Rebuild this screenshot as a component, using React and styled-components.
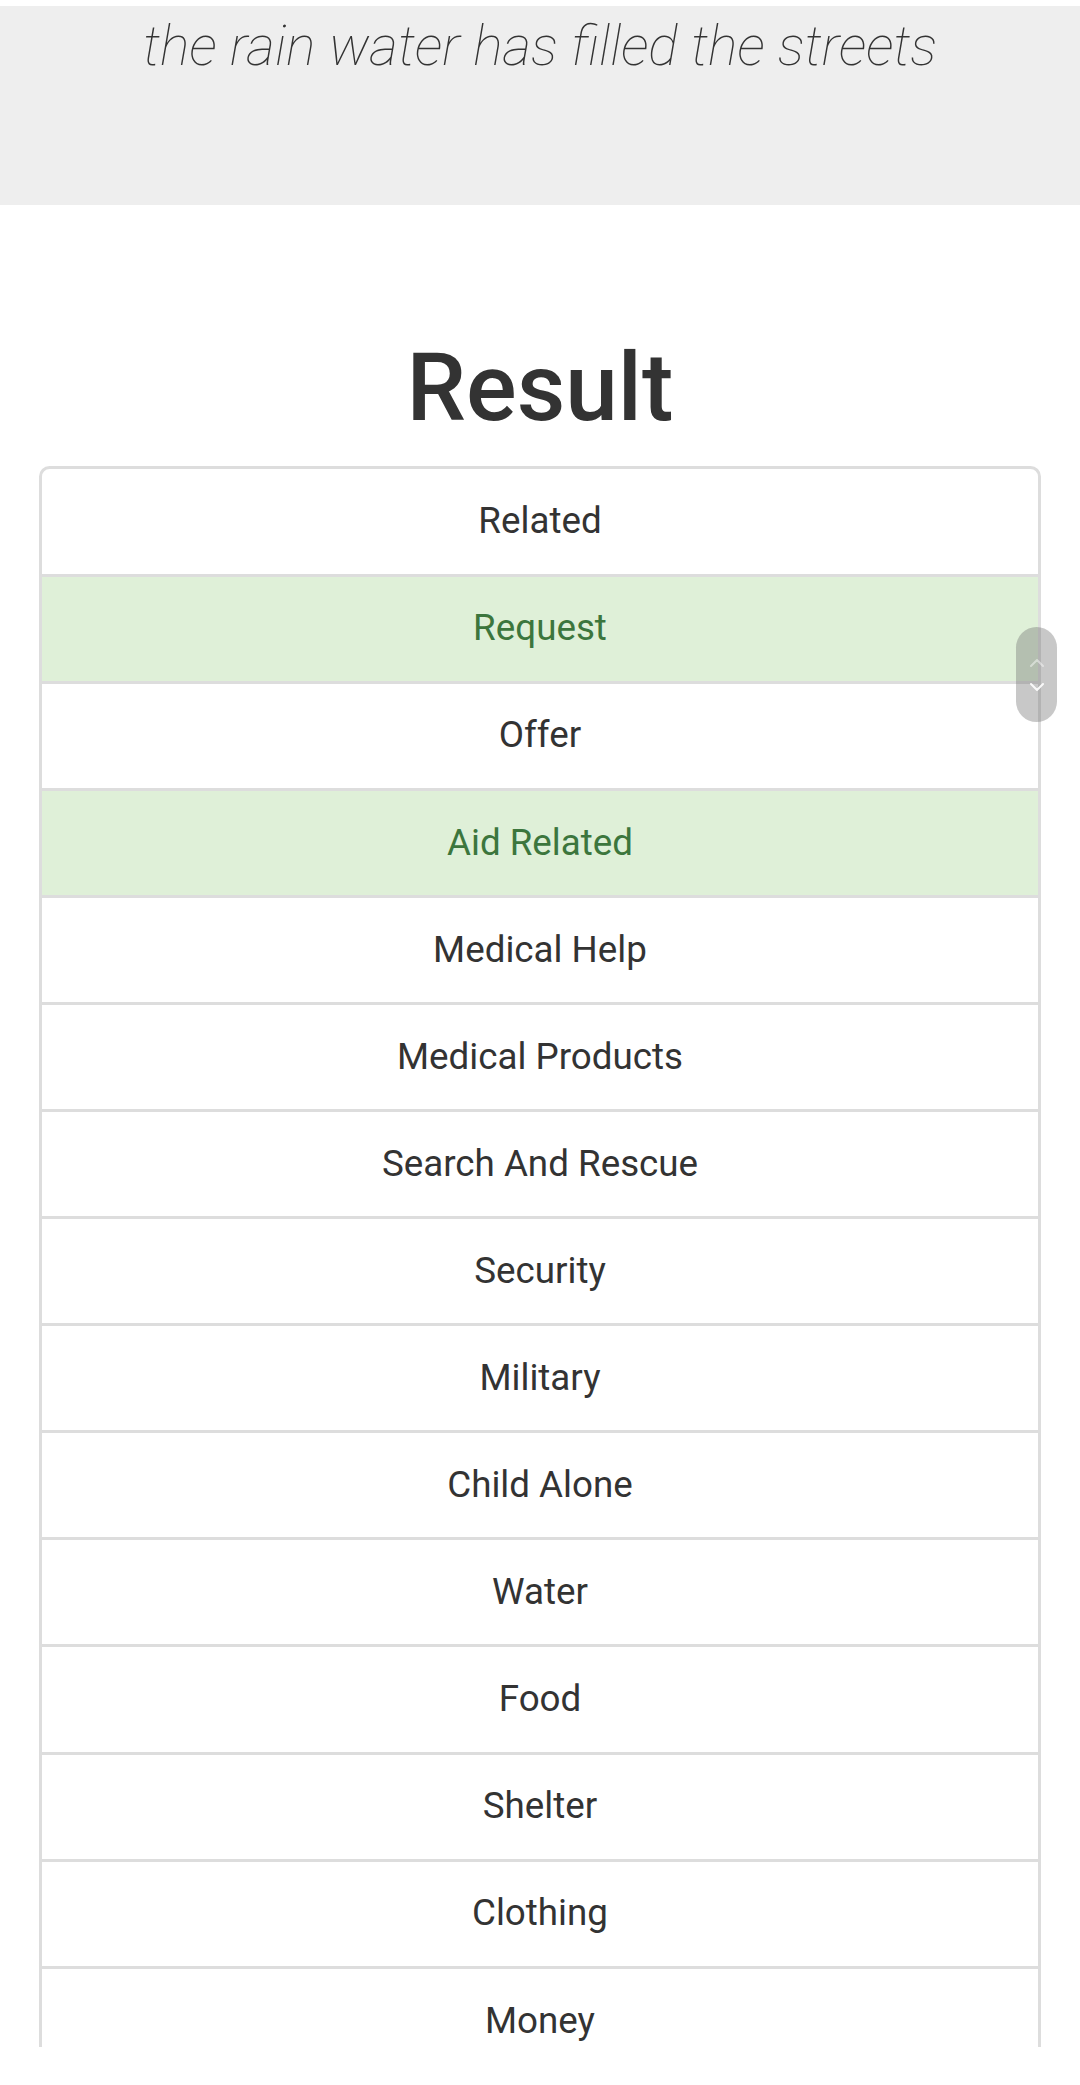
import React from "react";
import styled, { createGlobalStyle } from "styled-components";

const S = 2.625;
const px = (v) => `${(v * S).toFixed(3)}px`;

const Global = createGlobalStyle`
  html, body { margin: 0; padding: 0; background: #fff; }
  body { font-family: Roboto, "Helvetica Neue", Arial, sans-serif; color: #333; }
  * { box-sizing: border-box; }
`;

const Viewport = styled.div`
  position: relative;
  height: 2047px;
  overflow: hidden;
  padding-top: 6px;
`;

const Jumbotron = styled.section`
  background: #eee;
  height: 199px;
  padding-top: 10px;
  margin-bottom: ${px(30)};
  text-align: center;
`;

const Message = styled.p`
  margin: 0;
  font-size: 55.5px;
  line-height: 1.1;
  font-weight: 100;
  font-style: italic;
  color: #333;
`;

const Container = styled.div`
  display: flow-root;
  padding: 0 ${px(15)};
`;

const Title = styled.h1`
  margin: ${px(20)} 0 ${px(10)};
  font-size: ${px(36)};
  line-height: 1.1;
  font-weight: 500;
  text-align: center;
  color: #333;
`;

const ListGroup = styled.ul`
  list-style: none;
  margin: 0;
  padding: 0;
`;

const Item = styled.li`
  display: block;
  padding: 25.8px ${px(15)};
  margin-bottom: -3px;
  border: 3px solid #ddd;
  font-size: ${px(14)};
  line-height: ${px(20)};
  text-align: center;
  background: ${(p) => (p.$success ? "#dff0d8" : "#fff")};
  color: ${(p) => (p.$success ? "#3c763d" : "#333")};
  &:first-child {
    border-top-left-radius: ${px(4)};
    border-top-right-radius: ${px(4)};
  }
`;

const ScrollPill = styled.div`
  position: absolute;
  left: 1016px;
  top: 627px;
  width: 41px;
  height: 95px;
  border-radius: 21px;
  background: rgba(110, 110, 110, 0.38);
  display: flex;
  flex-direction: column;
  align-items: center;
  justify-content: center;
  gap: 14px;
`;

const Chevron = ({ up, faded }) => (
  <svg width="16" height="10" viewBox="0 0 16 10" style={{ opacity: faded ? 0.45 : 0.9 }}>
    <path
      d={up ? "M2 8 L8 2 L14 8" : "M2 2 L8 8 L14 2"}
      fill="none"
      stroke="#fff"
      strokeWidth="2"
      strokeLinecap="round"
      strokeLinejoin="round"
    />
  </svg>
);

const categories = [
  ["Related", false],
  ["Request", true],
  ["Offer", false],
  ["Aid Related", true],
  ["Medical Help", false],
  ["Medical Products", false],
  ["Search And Rescue", false],
  ["Security", false],
  ["Military", false],
  ["Child Alone", false],
  ["Water", false],
  ["Food", false],
  ["Shelter", false],
  ["Clothing", false],
  ["Money", false],
];

export default function App() {
  return (
    <>
      <Global />
      <Viewport>
        <Jumbotron>
          <Message>the rain water has filled the streets</Message>
        </Jumbotron>
        <Container>
          <Title>Result</Title>
          <ListGroup>
            {categories.map(([name, ok]) => (
              <Item key={name} $success={ok}>
                {name}
              </Item>
            ))}
          </ListGroup>
        </Container>
        <ScrollPill>
          <Chevron up faded />
          <Chevron />
        </ScrollPill>
      </Viewport>
    </>
  );
}
